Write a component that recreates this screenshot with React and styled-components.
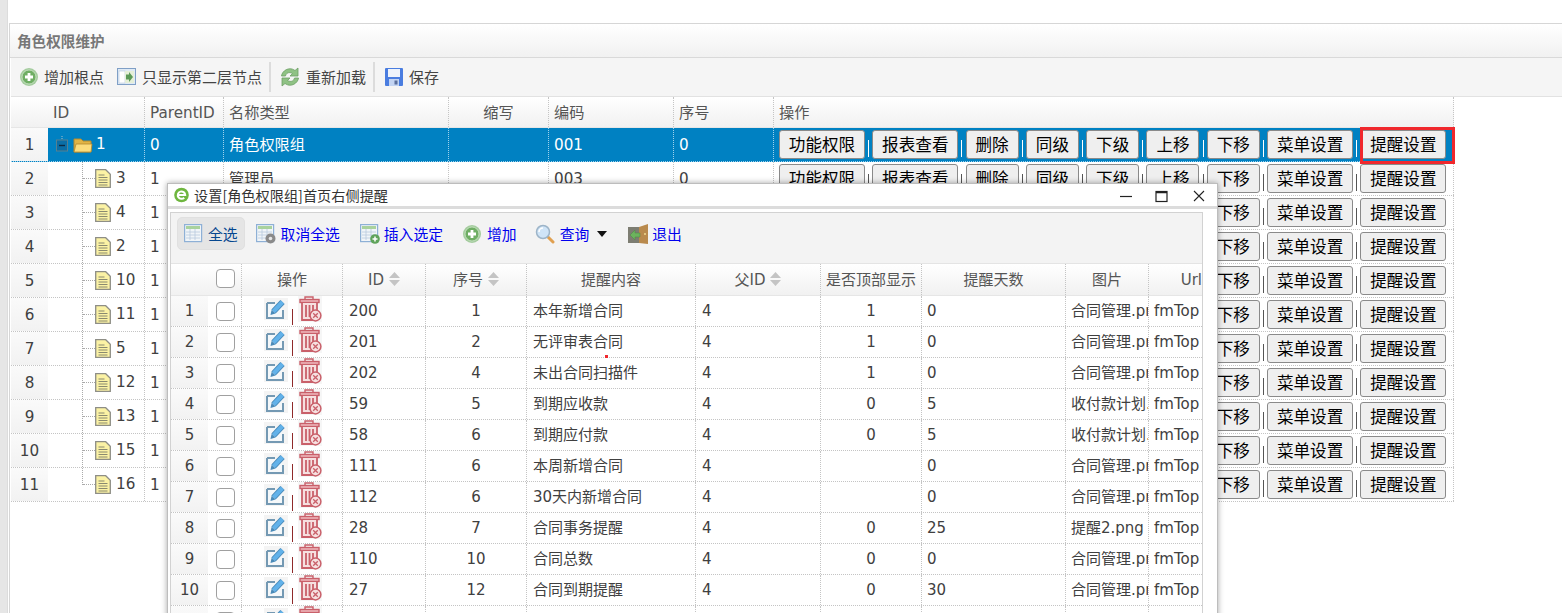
import React from 'react';
import styled, { createGlobalStyle } from 'styled-components';

const Global = createGlobalStyle`
  html, body { margin: 0; padding: 0; background: #fff; overflow: hidden; }
  body { font-family: "DejaVu Sans", "Noto Sans CJK SC", sans-serif; color: #404040; }
  * { box-sizing: border-box; }
`;

const Page = styled.div`position: relative; width: 1562px; height: 613px; overflow: hidden; background: #fff;`;
const Gutter = styled.div`position: absolute; left: 0; top: 0; bottom: 0; width: 8px; background: #e6e6e6; border-right: 1px solid #dcdcdc;`;
const Panel = styled.div`position: absolute; left: 9px; right: 0; top: 23px; bottom: 0; border-top: 1px solid #d6d6d6; border-left: 1px solid #d6d6d6;`;
const PanelTitle = styled.div`
  height: 34px; line-height: 34px; padding-left: 7px; font-size: 14.6px; font-weight: 700; color: #777;
  font-family: "Noto Sans CJK SC", sans-serif;
  background: linear-gradient(#fff, #f1f1f1); border-bottom: 1px solid #d9d9d9;
`;
const ToolBar = styled.div`
  height: 39px; display: flex; align-items: center; background: #f5f5f5; padding: 0 0 1px 9px;
  border-bottom: 1px solid #e2e2e2; margin-left: 1px;
`;
const ToolItem = styled.div`
  display: flex; align-items: center; gap: 6px; margin-right: ${p => p.$mr || 0}px; font-size: 15px;
  color: #444; font-family: "Noto Sans CJK SC", sans-serif;
`;
const ToolSep = styled.div`width: 2px; height: 30px; background: #dcdcdc; margin: 0 ${p => p.$r}px 0 ${p => p.$l}px;`;

const Grid = styled.div`margin-left: 1px; width: 1443px;`;
const Row = styled.div`
  display: flex; height: 34px; line-height: 35px; font-size: 15.2px; color: ${p => p.$sel ? '#fff' : '#404040'};
  background: ${p => p.$sel ? '#0081c2' : '#fff'};
  border-bottom: 1px dotted ${p => p.$sel ? '#9fd2ec' : '#c4c4c4'};
`;
const HeadRow = styled.div`
  display: flex; height: 31px; line-height: 32px; font-size: 15.2px; color: #555;
  background: linear-gradient(#fff, #f1f1f1); border-bottom: 1px solid #e6e6e6; 
`;
const Cell = styled.div`
  width: ${p => p.$w}px; flex: none; padding-left: ${p => p.$pl ?? 5}px; text-align: ${p => p.$center ? 'center' : 'left'};
  white-space: nowrap; overflow: hidden; border-right: 1px dotted ${p => p.$sel ? '#9fd2ec' : '#c4c4c4'};
  &:last-child { border-right: 1px dotted #c4c4c4; }
`;
const NumCell = styled.div`
  width: 37px; flex: none; text-align: center; background: ${p => p.$head ? 'transparent' : 'linear-gradient(#fafafa, #f2f2f2)'}; color: #404040;
`;
const TreeCell = styled.div`
  width: 97px; flex: none; display: flex; align-items: center; position: relative; border-right: 1px dotted ${p => p.$sel ? '#9fd2ec' : '#c4c4c4'};
`;
const TreeSpace = styled.span`width: ${p => p.$w}px; flex: none;`;
const TreeLine = styled.div`
  position: absolute; left: 34px; top: 0; height: ${p => p.$last ? 17 : 33}px; border-left: 1px dotted #aaa;
  &::after { content: ''; position: absolute; left: 0; top: 16px; width: 12px; border-top: 1px dotted #aaa; }
`;
const ActionCell = styled.div`
  width: 680px; flex: none; display: flex; align-items: center; padding-left: 5px; border-right: 1px dotted #c4c4c4; height: 33px;
`;
const OpButton = styled.div`
  position: relative; width: ${p => p.$w}px; height: 29px; line-height: 27px; flex: none; text-align: center; color: #000; font-size: 16.6px;
  font-family: "Noto Sans CJK SC", sans-serif; background: #efefef; border: 1px solid #8a8a8a; border-radius: 3px;
  ${p => p.$mark ? `&::after { content: ''; position: absolute; left: -1px; right: -10px; top: -4px; bottom: -6px; border: 3px solid #f0282d; }` : ''}
`;
const OpSep = styled.div`width: 7.3px; flex: none; display: flex; justify-content: center; &::after { content: ''; width: 1px; height: 17px; margin-top: 8px; background: ${p => p.$sel ? '#fff' : '#555'}; }`;

const Dialog = styled.div`
  position: absolute; left: 167px; top: 183px; width: 1051px; height: 440px; background: #fff;
  border: 1px solid #bdbdbd; box-shadow: 0 0 6px rgba(0,0,0,.35);
`;
const DialogTitle = styled.div`
  position: relative; height: 25px; display: flex; align-items: center; padding-left: 6px; gap: 5px; background: #fff;
  font-size: 14.2px; color: #333; font-family: "Noto Sans CJK SC", sans-serif; border-bottom: 3px solid #dcdcdc;
`;
const WinControls = styled.svg`position: absolute; left: 950px; top: 4px;`;
const DialogBody = styled.div`margin: 3px 14px 0 2px; border: 1px solid #d2d2d2; border-bottom: 0; height: 420px; overflow: hidden;`;
const DialogBar = styled.div`
  height: 51px; background: #f3f3f3; display: flex; align-items: flex-start; padding: 4px 0 0 6px; border-bottom: 1px solid #e4e4e4;
`;
const BarButton = styled.div`
  display: flex; align-items: center; gap: ${p => p.$gap || 4}px; height: 33px; padding: 0 6px; margin-right: ${p => p.$mr || 0}px; border-radius: 5px;
  background: ${p => p.$active ? '#e5e5e5' : 'transparent'}; font-size: 14.8px; color: ${p => p.$active ? '#05478f' : '#0000ee'};
  font-family: "Noto Sans CJK SC", sans-serif; border: 1px solid ${p => p.$active ? '#e0e0e0' : 'transparent'};
`;
const Caret = styled.div`width: 0; height: 0; border-left: 5.5px solid transparent; border-right: 5.5px solid transparent; border-top: 6px solid #111; margin-left: 3px;`;
const DHead = styled.div`
  display: flex; height: 32px; line-height: 33px; font-size: 15px; color: #555; background: linear-gradient(#fff, #f1f1f1); border-bottom: 1px solid #e6e6e6;
`;
const DRow = styled.div`display: flex; height: 31px; line-height: 30px; font-size: 15px; color: #404040; border-bottom: 1px dotted #c4c4c4; background: #fff;`;
const DCell = styled.div`
  position: relative; width: ${p => p.$w}px; flex: none; padding-left: ${p => p.$pl ?? 5}px; text-align: ${p => p.$align || 'left'}; white-space: nowrap; overflow: hidden;
  border-right: ${p => p.$noBorder ? '0' : '1px dotted #c4c4c4'};
`;
const DNum = styled.div`width: 37px; flex: none; text-align: center; background: ${p => p.$head ? 'transparent' : 'linear-gradient(#fafafa, #f2f2f2)'};`;
const Check = styled.div`width: 19px; height: 19px; border: 1.5px solid #a0a0a0; border-radius: 4px; background: #fff; margin: ${p => p.$head ? '5px' : '6px'} 0 0 8px;`;
const OpIcons = styled.div`display: flex; align-items: flex-start; padding-left: 22px; height: 30px;`;
const EditWrap = styled.div`margin-top: 2px; height: 22px; line-height: 0;`;
const TrashWrap = styled.div`height: 26px; line-height: 0;`;
const RedBar = styled.div`width: 1px; height: 16px; background: #8f2a2a; margin: 13px 5px 0 4px;`;
const Sort = styled.svg`margin-left: 5px; vertical-align: -1px;`;
const Dot = styled.div`position: absolute; left: 605px; top: 355px; width: 3px; height: 3px; background: #f0282d; z-index: 5;`;

const Add = ({ s = 18 }) => (
  <svg width={s} height={s} viewBox="0 0 18 18">
    <circle cx="9" cy="9" r="9" fill="#a4cc9e" /><circle cx="9" cy="9" r="7" fill="#6fae64" stroke="#cfe5ca" strokeWidth=".8" />
    <path d="M9 5v8M5 9h8" stroke="#fff" strokeWidth="2.800" />
  </svg>
);
const Layer = () => (
  <svg width="19" height="18" viewBox="0 0 19 18">
    <rect x=".5" y=".5" width="18" height="16" fill="#dfeaf5" stroke="#7f9fc6" />
    <rect x="2" y="3" width="6" height="12" fill="#fff" stroke="#b4c7dd" strokeWidth=".6" />
    <rect x="8" y="3" width="9" height="12" fill="#e5efd8" />
    <path d="M9 6.500h3V4l4 5-4 5v-2.500H9z" fill="#5c9a58" />
  </svg>
);
const Reload = () => (
  <svg width="20" height="20" viewBox="0 0 20 20" fill="none">
    <path d="M1.500 9C2 4 9 -1 15 3.500L18 1v8h-8l2.500-2.500C9 4.500 6 6 5.500 9z" fill="#8fc284" stroke="#6d9f66" strokeWidth=".8" />
    <path d="M18.500 11C18 16 11 21 5 16.500L2 19v-8h8l-2.500 2.500C11 15.500 14 14 14.500 11z" fill="#8fc284" stroke="#6d9f66" strokeWidth=".8" />
  </svg>
);
const Save = () => (
  <svg width="18" height="18" viewBox="0 0 18 18">
    <rect width="18" height="18" rx="1" fill="#4a7de0" />
    <rect x="3" y="1" width="12" height="8" fill="#eef3fb" />
    <rect x="4" y="11" width="10" height="7" fill="#c3d4f2" />
    <rect x="9.500" y="12.500" width="3" height="4" fill="#5b6f9c" />
  </svg>
);
const TableIco = ({ badge }) => (
  <svg width="20" height="20" viewBox="0 0 20 20">
    <rect x=".6" y=".6" width="17" height="17" fill="#f1f5f8" stroke="#8eb0d6" strokeWidth="1.200" />
    <rect x="2" y="2" width="14" height="3" fill="#a9d29d" />
    <path d="M2 8h14M2 11h14M2 14h14M6 5v11M11 5v11" stroke="#b9c9dd" strokeWidth=".8" />
    {badge === 'gear' && <><circle cx="14.500" cy="14.500" r="5" fill="#8a8a8a" /><circle cx="14.500" cy="14.500" r="1.800" fill="#e6e6e6" /></>}
    {badge === 'plus' && <><circle cx="15" cy="15" r="4.800" fill="#5fa35a" /><path d="M15 12.500v5M12.500 15h5" stroke="#fff" strokeWidth="1.500" /></>}
  </svg>
);
const Search = () => (
  <svg width="20" height="20" viewBox="0 0 20 20">
    <path d="M12 12l6 6" stroke="#e0a050" strokeWidth="3" strokeLinecap="round" />
    <circle cx="8" cy="8" r="6.500" fill="#cfe4f7" stroke="#9db4c8" strokeWidth="1.500" />
    <path d="M4 8a4 4 0 0 1 4-4" stroke="#fff" strokeWidth="1.500" fill="none" />
  </svg>
);
const Door = () => (
  <svg width="20" height="20" viewBox="0 0 20 20">
    <rect x="0" y="3" width="14" height="16" fill="#7d7d72" />
    <path d="M11 3l9-3v20l-9-1z" fill="#b98a4d" /><circle cx="17" cy="10" r="1" fill="#f0d890" />
    <path d="M2 11l5-5v3h5v4H7v3z" fill="#6cb35d" stroke="#4c8a42" strokeWidth=".5" />
  </svg>
);
const IE = () => (
  <svg width="15" height="16" viewBox="0 0 15 16">
    <circle cx="7.500" cy="8" r="7.300" fill="#6fb63f" />
    <path d="M3.800 8h7.400a3.700 3.700 0 1 0-1 2.700" fill="none" stroke="#fff" strokeWidth="2" />
  </svg>
);
const Folder = () => (
  <svg width="20" height="16" viewBox="0 0 20 16">
    <path d="M1 2h7l2 2h8v11H1z" fill="#e0b445" stroke="#b2892f" />
    <path d="M1 15l2-8h16l-1 8z" fill="#fbdc7c" stroke="#b2892f" strokeWidth=".8" />
  </svg>
);
const Toggle = () => (
  <svg width="12" height="18" viewBox="0 0 12 18">
    <path d="M6 0v4" stroke="#aebfcc" strokeDasharray="1 1" />
    <rect x=".5" y="4" width="11" height="11" fill="#0a6ea6" stroke="#57808f" />
    <path d="M3 9.500h6" stroke="#0b2a44" strokeWidth="1.400" />
  </svg>
);
const FileIco = () => (
  <svg width="16" height="19" viewBox="0 0 16 19">
    <path d="M.7.700h10l4.600 4.600v13H.700z" fill="#fbf2a4" stroke="#8e8e86" strokeWidth="1.300" />
    <path d="M3.500 6h6M3.500 8.500h9M3.500 11h9M3.500 13.500h9M3.500 16h9" stroke="#8a8a70" strokeWidth="1" />
  </svg>
);
const Edit = () => (
  <svg width="24" height="22" viewBox="0 0 24 22">
    <rect width="24" height="22" fill="#f4f4f4" />
    <path d="M3 5h8M3 5v15h16v-8" fill="#fff" stroke="#7499b3" strokeWidth="2" />
    <rect x="4" y="6" width="14" height="13" fill="#f5f8fa" />
    <path d="M9.500 13.500L18.500 4" stroke="#4a8ab8" strokeWidth="6" />
    <path d="M9.500 13.500L18.500 4" stroke="#62b2ea" strokeWidth="4" />
    <path d="M6.500 17l1-5 4 3.500z" fill="#4a8ab8" />
  </svg>
);
const Trash = () => (
  <svg width="24" height="26" viewBox="0 0 24 26">
    <rect width="24" height="26" fill="#f6f6f6" />
    <path d="M7 3V1h8v2" fill="none" stroke="#c9606a" strokeWidth="1.400" />
    <rect x="2" y="3.500" width="19" height="3" fill="#eeb4ba" stroke="#c9606a" strokeWidth="1.400" />
    <path d="M4 7v17h15V7" fill="#f6e0e0" stroke="#c9606a" strokeWidth="1.800" />
    <path d="M8 9v12M11.500 9v12M15 9v6" stroke="#c9606a" strokeWidth="1.800" />
    <circle cx="17.500" cy="19.500" r="5.400" fill="#f6e0e0" stroke="#c9606a" strokeWidth="1.500" />
    <path d="M15.200 17.200l4.600 4.600M19.800 17.200l-4.600 4.600" stroke="#c9606a" strokeWidth="1.300" />
  </svg>
);
const SortIco = () => (
  <Sort width="11" height="14" viewBox="0 0 11 14"><path d="M5.500 0L11 6H0zM0 8h11l-5.500 6z" fill="#c4c4c4" /></Sort>
);

const ops = [['功能权限', 86], ['报表查看', 86], ['删除', 53], ['同级', 53], ['下级', 53], ['上移', 53], ['下移', 53], ['菜单设置', 86], ['提醒设置', 86]];
const treeRows = [
  { id: '3', name: '管理员', code: '003', seq: '0' }, { id: '4' }, { id: '2' }, { id: '10' }, { id: '11' },
  { id: '5' }, { id: '12' }, { id: '13' }, { id: '15' }, { id: '16', last: true },
];
const cols = { name: 225, abbr: 100, code: 125, seq: 100 };

const Ops = ({ sel }) => (
  <ActionCell>
    {ops.map(([t, w], i) => (
      <React.Fragment key={t}>
        {i > 0 && <OpSep $sel={sel} />}
        <OpButton $w={w} $mark={sel && i === 8}>{t}</OpButton>
      </React.Fragment>
    ))}
  </ActionCell>
);

const rows = [
  [200, 1, '本年新增合同', 1, 0, '合同管理.png'], [201, 2, '无评审表合同', 1, 0, '合同管理.png'], [202, 4, '未出合同扫描件', 1, 0, '合同管理.png'],
  [59, 5, '到期应收款', 0, 5, '收付款计划.png'], [58, 6, '到期应付款', 0, 5, '收付款计划.png'], [111, 6, '本周新增合同', '', 0, '合同管理.png'],
  [112, 6, '30天内新增合同', '', 0, '合同管理.png'], [28, 7, '合同事务提醒', 0, 25, '提醒2.png'], [110, 10, '合同总数', 0, 0, '合同管理.png'],
  [27, 12, '合同到期提醒', 0, 30, '合同管理.png'], ['', '', '', '', '', ''],
];
const dw = [34, 101, 83, 101, 169, 125, 101, 144, 83, 53];

export default function App() {
  return (
    <Page>
      <Global />
      <Gutter />
      <Panel>
        <PanelTitle>角色权限维护</PanelTitle>
        <ToolBar>
          <ToolItem $mr={13}><Add />增加根点</ToolItem>
          <ToolItem $mr={0}><Layer />只显示第二层节点</ToolItem>
          <ToolSep $l={7} $r={9} />
          <ToolItem><Reload />重新加载</ToolItem>
          <ToolSep $l={7} $r={10} />
          <ToolItem><Save />保存</ToolItem>
        </ToolBar>
        <Grid>
          <HeadRow>
            <NumCell $head />
            <Cell $w={97}>ID</Cell>
            <Cell $w={79}>ParentID</Cell>
            <Cell $w={cols.name}>名称类型</Cell>
            <Cell $w={cols.abbr} $center $pl={0}>缩写</Cell>
            <Cell $w={cols.code}>编码</Cell>
            <Cell $w={cols.seq}>序号</Cell>
            <Cell $w={680}>操作</Cell>
          </HeadRow>
          <Row $sel>
            <NumCell>1</NumCell>
            <TreeCell $sel><TreeSpace $w={8} /><Toggle /><TreeSpace $w={5} /><Folder /><TreeSpace $w={3} />1</TreeCell>
            <Cell $w={79} $sel>0</Cell>
            <Cell $w={cols.name} $sel>角色权限组</Cell>
            <Cell $w={cols.abbr} $sel />
            <Cell $w={cols.code} $sel>001</Cell>
            <Cell $w={cols.seq} $sel>0</Cell>
            <Ops sel />
          </Row>
          {treeRows.map((r, i) => (
            <Row key={r.id}>
              <NumCell>{i + 2}</NumCell>
              <TreeCell>
                <TreeLine $last={r.last} />
                <TreeSpace $w={47} /><FileIco /><TreeSpace $w={5} />{r.id}
              </TreeCell>
              <Cell $w={79}>1</Cell>
              <Cell $w={cols.name}>{r.name}</Cell>
              <Cell $w={cols.abbr} />
              <Cell $w={cols.code}>{r.code}</Cell>
              <Cell $w={cols.seq}>{r.seq}</Cell>
              <Ops />
            </Row>
          ))}
        </Grid>
      </Panel>
      <Dialog>
        <DialogTitle>
          <IE />设置[角色权限组]首页右侧提醒
          <WinControls width="90" height="16" viewBox="0 0 90 16" fill="none" stroke="#222">
            <path d="M2 8.500h12" strokeWidth="1.200" />
            <rect x="38" y="3.500" width="11" height="10" strokeWidth="1.200" /><path d="M38 4.500h11" strokeWidth="1.500" />
            <path d="M76 3l10 10M86 3L76 13" strokeWidth="1.100" />
          </WinControls>
        </DialogTitle>
        <DialogBody>
          <DialogBar>
            <BarButton $active $mr={4}><TableIco />全选</BarButton>
            <BarButton $mr={6} $gap={5}><TableIco badge="gear" />取消全选</BarButton>
            <BarButton $mr={6}><TableIco badge="plus" />插入选定</BarButton>
            <BarButton $mr={4} $gap={6}><Add />增加</BarButton>
            <BarButton $mr={7} $gap={5}><Search />查询<Caret /></BarButton>
            <BarButton><Door />退出</BarButton>
          </DialogBar>
          <DHead>
            <DNum $head />
            <DCell $w={dw[0]} $pl={0}><Check $head /></DCell>
            <DCell $w={dw[1]} $align="center" $pl={0}>操作</DCell>
            <DCell $w={dw[2]} $align="center" $pl={0}>ID<SortIco /></DCell>
            <DCell $w={dw[3]} $align="center" $pl={0}>序号<SortIco /></DCell>
            <DCell $w={dw[4]} $align="center" $pl={0}>提醒内容</DCell>
            <DCell $w={dw[5]} $align="center" $pl={0}>父ID<SortIco /></DCell>
            <DCell $w={dw[6]} $align="center" $pl={0}>是否顶部显示</DCell>
            <DCell $w={dw[7]} $align="center" $pl={0}>提醒天数</DCell>
            <DCell $w={dw[8]} $align="center" $pl={0}>图片</DCell>
            <DCell $w={dw[9]} $noBorder $pl={0} $align="right">Url</DCell>
          </DHead>
          {rows.map((r, i) => (
            <DRow key={i}>
              <DNum>{i + 1}</DNum>
              <DCell $w={dw[0]} $pl={0}><Check /></DCell>
              <DCell $w={dw[1]} $pl={0}><OpIcons><EditWrap><Edit /></EditWrap><RedBar /><TrashWrap><Trash /></TrashWrap></OpIcons></DCell>
              <DCell $w={dw[2]} $pl={6}>{r[0]}</DCell>
              <DCell $w={dw[3]} $align="center" $pl={0}>{r[1]}</DCell>
              <DCell $w={dw[4]} $pl={6}>{r[2]}</DCell>
              <DCell $w={dw[5]} $pl={6}>{r[0] === '' ? '' : 4}</DCell>
              <DCell $w={dw[6]} $align="center" $pl={0}>{r[3]}</DCell>
              <DCell $w={dw[7]}>{r[4]}</DCell>
              <DCell $w={dw[8]}>{r[5]}</DCell>
              <DCell $w={dw[9]} $noBorder>{r[0] === '' ? '' : 'fmTop'}</DCell>
            </DRow>
          ))}
        </DialogBody>
      </Dialog>
      <Dot />
    </Page>
  );
}
